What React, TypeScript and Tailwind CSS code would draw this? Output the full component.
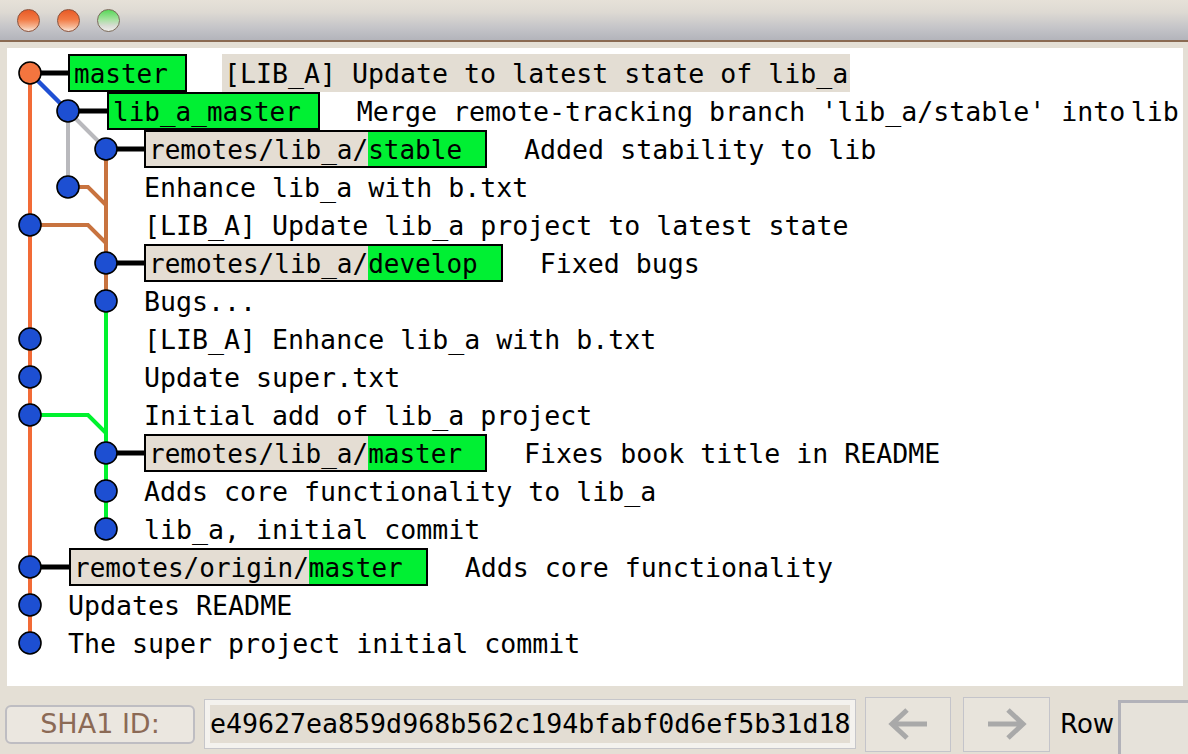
import React from 'react';

type Label = { remote?: string; name: string };
type Row = { pad: string; label?: Label; text: React.ReactNode; selected?: boolean };

const rows: Row[] = [
  { pad: 'pl-[61px]', label: { name: 'master' }, text: '[LIB_A] Update to latest state of lib_a', selected: true },
  {
    pad: 'pl-[100px]',
    label: { name: 'lib_a_master' },
    text: (
      <>
        Merge remote-tracking branch 'lib_a/stable' into<span className="text-[9px]"> </span>lib
      </>
    ),
  },
  { pad: 'pl-[137px]', label: { remote: 'remotes/lib_a/', name: 'stable' }, text: 'Added stability to lib' },
  { pad: 'pl-[135px]', text: 'Enhance lib_a with b.txt' },
  { pad: 'pl-[135px]', text: '[LIB_A] Update lib_a project to latest state' },
  { pad: 'pl-[137px]', label: { remote: 'remotes/lib_a/', name: 'develop' }, text: 'Fixed bugs' },
  { pad: 'pl-[135px]', text: 'Bugs...' },
  { pad: 'pl-[135px]', text: '[LIB_A] Enhance lib_a with b.txt' },
  { pad: 'pl-[135px]', text: 'Update super.txt' },
  { pad: 'pl-[135px]', text: 'Initial add of lib_a project' },
  { pad: 'pl-[137px]', label: { remote: 'remotes/lib_a/', name: 'master' }, text: 'Fixes book title in README' },
  { pad: 'pl-[135px]', text: 'Adds core functionality to lib_a' },
  { pad: 'pl-[135px]', text: 'lib_a, initial commit' },
  { pad: 'pl-[62px]', label: { remote: 'remotes/origin/', name: 'master' }, text: 'Adds core functionality' },
  { pad: 'pl-[59px]', text: 'Updates README' },
  { pad: 'pl-[59px]', text: 'The super project initial commit' },
];

// lane of each commit dot, by row
const dotLanes = [0, 1, 2, 1, 0, 2, 2, 0, 0, 0, 2, 2, 2, 0, 0, 0];
const laneX = [30, 68, 106];
const rowY = (i: number) => 73 + i * 38;

function Graph() {
  return (
    <svg
      className="absolute left-0 top-0"
      width={1176}
      height={638}
      viewBox="7 48 1176 638"
    >
      <g fill="none" strokeWidth={4} strokeLinejoin="miter">
        <path d="M30 73 V643" stroke="#f26b36" />
        <path d="M30 73 L68 111" stroke="#1f50d4" strokeWidth={4.5} />
        <path d="M68 111 V187 M68 111 L106 149" stroke="#b9b9bd" />
        <path d="M106 149 V301 M68 187 H88 L106 205 M30 225 H88 L106 243" stroke="#c8733f" />
        <path d="M106 301 V529 M30 415 H88 L106 433" stroke="#00f22e" />
      </g>
      <g stroke="#000" strokeWidth={5}>
        <path d="M30 73 H68 M68 111 H107 M106 149 H144 M106 263 H144 M106 453 H144 M30 567 H69" />
      </g>
      {dotLanes.map((lane, i) => (
        <circle
          key={i}
          cx={laneX[lane]}
          cy={rowY(i)}
          r={11}
          fill={i === 0 ? '#f4753f' : '#1d4fd2'}
          stroke="#000"
          strokeWidth={1.6}
        />
      ))}
    </svg>
  );
}

function RefLabel({ label }: { label: Label }) {
  return (
    <div className="flex h-[38px] shrink-0 items-stretch border-2 border-black text-[26px]">
      {label.remote ? (
        <>
          <span className="flex items-center bg-[#e4ddd3] pl-[3px] pt-[2px]">{label.remote}</span>
          <span className="flex items-center bg-[#00f033] pr-[23px] pt-[2px]">{label.name}</span>
        </>
      ) : (
        <span className="flex items-center bg-[#00f033] pl-[4px] pr-[17px] pt-[2px]">{label.name}</span>
      )}
    </div>
  );
}

function Lights() {
  return (
    <div className="flex items-center gap-[17px] pl-[17px]">
      <div className="h-[23px] w-[23px] rounded-full border border-[#8a5038] bg-[linear-gradient(180deg,#e85a26_0%,#f27a44_45%,#f6b896_80%,#fae6da_100%)]" />
      <div className="h-[23px] w-[23px] rounded-full border border-[#8a5038] bg-[linear-gradient(180deg,#e85a26_0%,#f27a44_45%,#f6b896_80%,#fae6da_100%)]" />
      <div className="h-[23px] w-[23px] rounded-full border border-[#7a6a5a] bg-[linear-gradient(180deg,#58d858_0%,#a6e2a0_45%,#d8dcd4_75%,#eeeeea_100%)]" />
    </div>
  );
}

function Arrow({ left }: { left?: boolean }) {
  return (
    <svg width="44" height="36" viewBox="0 0 44 36">
      <path
        d={left ? 'M41 18 H8 M21 4 L6 18 L21 32' : 'M3 18 H36 M23 4 L38 18 L23 32'}
        fill="none"
        stroke="#a9a9a9"
        strokeWidth={5}
      />
    </svg>
  );
}

export default function App() {
  return (
    <div className="flex h-[754px] w-[1188px] flex-col overflow-hidden bg-[#e4dfd5] font-['DejaVu_Sans_Mono',monospace] text-black">
      <div className="flex h-[42px] shrink-0 items-center border-b-2 border-[#8a6a52] bg-[linear-gradient(180deg,#e6e1d8_0%,#dedad3_30%,#c4c4c8_70%,#b3b4bb_100%)]">
        <Lights />
      </div>

      <div className="mt-[6px] ml-[7px] mr-[5px] h-[638px] shrink-0">
        <div className="relative h-full w-full overflow-hidden bg-white">
          <Graph />
          <div className="relative pt-[6px] text-[26.6px] leading-none">
            {rows.map((row, i) => (
              <div key={i} className={`flex h-[38px] items-center whitespace-nowrap ${row.pad}`}>
                {row.label && <RefLabel label={row.label} />}
                <div
                  className={`flex h-[38px] items-center px-[2px] pt-[2px] ${row.label ? 'ml-[35px]' : ''} ${
                    row.selected ? 'bg-[#e3ddd3]' : ''
                  }`}
                >
                  <span>{row.text}</span>
                </div>
              </div>
            ))}
          </div>
        </div>
      </div>

      <div className="flex flex-1 items-center pt-[8px] pl-[5px]">
        <div className="flex h-[39px] w-[190px] shrink-0 items-center justify-center rounded-[6px] border-2 border-[#bebdc2] bg-[#ebe7e0] font-['DejaVu_Sans',sans-serif] text-[27px] text-[#8b6a55]">
          SHA1 ID:
        </div>
        <div className="ml-[9px] flex h-[50px] w-[652px] shrink-0 items-center border border-[#c6c6ca] bg-[#f4f2ee] p-[5px]">
          <div className="flex h-full w-full items-center bg-[#e3ddd3] text-[26.6px] leading-none">
            e49627ea859d968b562c194bfabf0d6ef5b31d18
          </div>
        </div>
        <div className="ml-[9px] flex h-[55px] w-[86px] shrink-0 items-center justify-center border border-[#c4c4ca] bg-[#e8e4dc]">
          <Arrow left />
        </div>
        <div className="ml-[12px] flex h-[55px] w-[87px] shrink-0 items-center justify-center border border-[#c4c4ca] bg-[#e8e4dc]">
          <Arrow />
        </div>
        <div className="ml-[10px] font-['DejaVu_Sans',sans-serif] text-[26px] text-black">Row</div>
        <div className="ml-[4px] h-[54px] flex-1 self-end border-l-[3px] border-t-[3px] border-[#b2b2b9] bg-[#e6e2da]" />
      </div>
    </div>
  );
}
